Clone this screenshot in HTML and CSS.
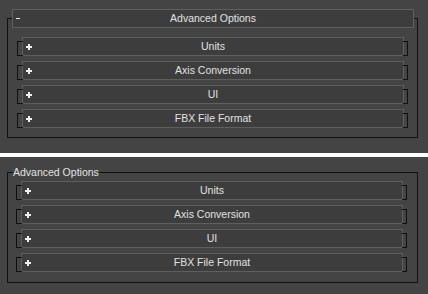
FILE: index.html
```html
<!DOCTYPE html>
<html lang="en">
<head>
  <meta charset="UTF-8">
  <title>Advanced Options</title>
  <link rel="stylesheet" href="styles.css">
</head>
<body>
  <div class="panel">
    <div class="rollout head">
      <svg class="sign" width="6" height="6" viewBox="0 0 6 6"><rect x="0" y="2" width="4" height="1" fill="#e8e8e8"/></svg>
      <span class="title">Advanced Options</span>
    </div>
    <div class="rollout sub">
      <svg class="sign" width="6" height="6" viewBox="0 0 6 6"><path d="M0 2h6v2H0zM2 0h2v6H2z" fill="#f0f0f0"/></svg>
      <span class="title">Units</span>
    </div>
    <div class="rollout sub">
      <svg class="sign" width="6" height="6" viewBox="0 0 6 6"><path d="M0 2h6v2H0zM2 0h2v6H2z" fill="#f0f0f0"/></svg>
      <span class="title">Axis Conversion</span>
    </div>
    <div class="rollout sub">
      <svg class="sign" width="6" height="6" viewBox="0 0 6 6"><path d="M0 2h6v2H0zM2 0h2v6H2z" fill="#f0f0f0"/></svg>
      <span class="title">UI</span>
    </div>
    <div class="rollout sub">
      <svg class="sign" width="6" height="6" viewBox="0 0 6 6"><path d="M0 2h6v2H0zM2 0h2v6H2z" fill="#f0f0f0"/></svg>
      <span class="title">FBX File Format</span>
    </div>
  </div>

  <div class="divider"></div>

  <fieldset class="group">
    <legend>Advanced Options</legend>
    <div class="rollout sub">
      <svg class="sign" width="6" height="6" viewBox="0 0 6 6"><path d="M0 2h6v2H0zM2 0h2v6H2z" fill="#f0f0f0"/></svg>
      <span class="title">Units</span>
    </div>
    <div class="rollout sub">
      <svg class="sign" width="6" height="6" viewBox="0 0 6 6"><path d="M0 2h6v2H0zM2 0h2v6H2z" fill="#f0f0f0"/></svg>
      <span class="title">Axis Conversion</span>
    </div>
    <div class="rollout sub">
      <svg class="sign" width="6" height="6" viewBox="0 0 6 6"><path d="M0 2h6v2H0zM2 0h2v6H2z" fill="#f0f0f0"/></svg>
      <span class="title">UI</span>
    </div>
    <div class="rollout sub">
      <svg class="sign" width="6" height="6" viewBox="0 0 6 6"><path d="M0 2h6v2H0zM2 0h2v6H2z" fill="#f0f0f0"/></svg>
      <span class="title">FBX File Format</span>
    </div>
  </fieldset>
</body>
</html>
```

FILE: styles.css
```css
* {
  box-sizing: border-box;
}
body {
  margin: 0;
  width: 428px;
  height: 294px;
  overflow: hidden;
  background: #444444;
  font-family: "Liberation Sans", Arial, sans-serif;
  font-size: 10.5px;
  color: #e2e2e2;
}
.panel {
  margin: 18px 10px 0 7px;
  border: 1px solid #111;
  padding: 0 0 9px;
}
.rollout {
  display: grid;
  grid-template-columns: 1fr auto 1fr;
  align-items: center;
  height: 19px;
  line-height: 17px;
  border: 1px solid #5f5f5f;
  background: #3d3d3d;
}
.rollout .sign {
  display: block;
  margin-left: 3px;
}
.rollout .title {
  white-space: nowrap;
}
.head {
  margin: -10px 3px 9px 4px;
}
.sub {
  position: relative;
  margin: 0 13px 5px 14px;
}
.sub:last-child {
  margin-bottom: 0;
}
.sub::before,
.sub::after {
  content: "";
  position: absolute;
  top: 3px;
  height: 13px;
  border: 1px solid #111;
}
.sub::before {
  left: -6px;
  width: 5px;
  border-right: 0;
}
.sub::after {
  right: -5px;
  width: 4px;
  border-left: 0;
}
.divider {
  margin-top: 15px;
  height: 4px;
  background: #fff;
}
.group {
  margin: 9px 10px 0 7px;
  padding: 3px 14px 10px 13px;
  border: 1px solid #111;
  min-width: 0;
}
.group legend {
  margin-left: -8px;
  padding: 0;
  line-height: 12px;
}
.group .sub {
  margin-left: 0;
  margin-right: 0;
}
.group .sub:last-child {
  margin-bottom: 0;
}
```
